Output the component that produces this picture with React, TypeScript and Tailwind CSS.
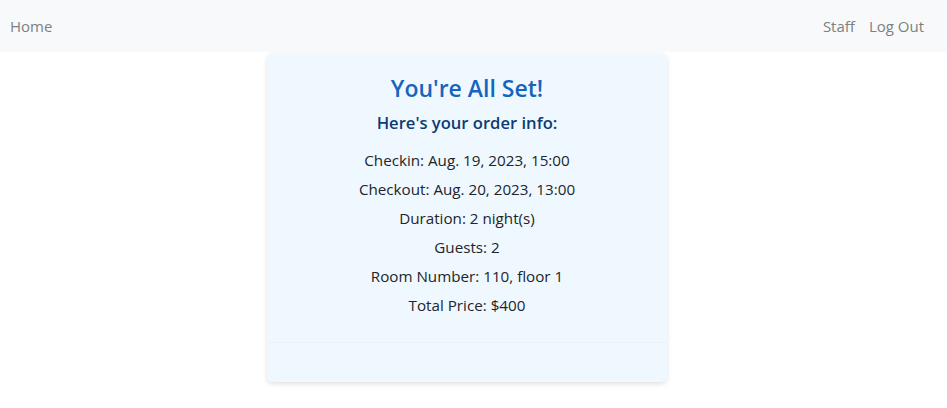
export default function App() {
  const lines = [
    'Checkin: Aug. 19, 2023, 15:00',
    'Checkout: Aug. 20, 2023, 13:00',
    'Duration: 2 night(s)',
    'Guests: 2',
    'Room Number: 110, floor 1',
    'Total Price: $400',
  ];

  return (
    <div className="min-h-[408px] bg-white font-['Open_Sans',sans-serif] text-[#212529]">
      <nav className="flex h-[52px] items-center justify-between bg-[#f8f9fa] px-[10px] text-[15px] text-[#7d7f81]">
        <a href="#">Home</a>
        <div className="flex gap-[14px] pr-[13px]">
          <a href="#">Staff</a>
          <a href="#">Log Out</a>
        </div>
      </nav>

      <div className="mt-px flex justify-center pr-[13px]">
        <div className="w-[400px] rounded-md bg-[#f0f8ff] shadow-[0_2px_5px_rgba(0,0,0,0.12)]">
          <div className="flex flex-col items-center pt-[19px] pb-[22px]">
            <h1 className="text-[23px] font-semibold leading-[32px] text-[#1565c0]">You're All Set!</h1>
            <h2 className="mt-[7px] text-[16.6px] font-semibold leading-[24px] text-[#0d3b75]">Here's your order info:</h2>
            <div className="mt-[11px] flex flex-col items-center text-[15.2px] leading-[29px]">
              {lines.map((l) => (
                <p key={l}>{l}</p>
              ))}
            </div>
          </div>
          <div className="h-[40px] rounded-b-md border-t border-[#eaf2f9] bg-[#f0f8ff]" />
        </div>
      </div>
    </div>
  );
}
